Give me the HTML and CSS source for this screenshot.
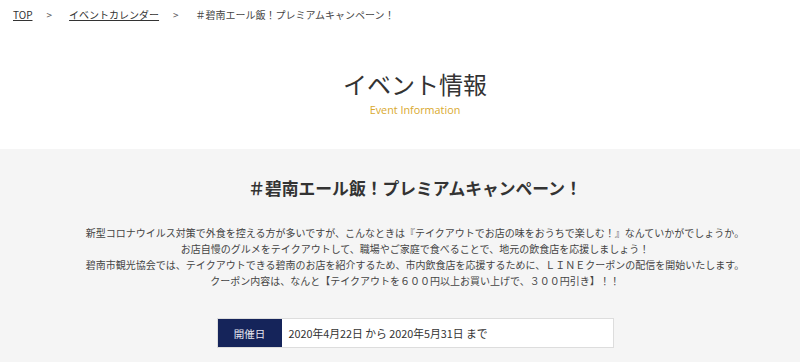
FILE: index.html
```html
<!DOCTYPE html>
<html lang="ja">
<head>
<meta charset="utf-8">
<link rel="stylesheet" href="styles.css">
</head>
<body>
<nav class="crumbs">
  <a class="crumb-link" href="#">TOP</a>
  <span class="sep">&gt;</span>
  <a class="crumb-link" href="#">イベントカレンダー</a>
  <span class="sep">&gt;</span>
  <span class="crumb-current">＃碧南エール飯！プレミアムキャンペーン！</span>
</nav>
<header class="page-head">
  <h1 class="page-title">イベント情報</h1>
  <p class="page-sub">Event Information</p>
</header>
<main class="main">
  <h2 class="event-title">＃碧南エール飯！プレミアムキャンペーン！</h2>
  <p class="event-desc">新型コロナウイルス対策で外食を控える方が多いですが、こんなときは『テイクアウトでお店の味をおうちで楽しむ！』なんていかがでしょうか。<br>お店自慢のグルメをテイクアウトして、職場やご家庭で食べることで、地元の飲食店を応援しましょう！<br>碧南市観光協会では、テイクアウトできる碧南のお店を紹介するため、市内飲食店を応援するために、ＬＩＮＥクーポンの配信を開始いたします。<br>クーポン内容は、なんと【テイクアウトを６００円以上お買い上げで、３００円引き】！！</p>
  <div class="info-table">
    <div class="info-row">
      <div class="info-label">開催日</div>
      <div class="info-value">2020年4月22日 から 2020年5月31日 まで</div>
    </div>
  </div>
</main>
</body>
</html>
```
FILE: styles.css
```css
html, body {
  margin: 0;
  padding: 0;
  background: #ffffff;
}
body {
  font-family: "Noto Sans CJK JP", "Noto Sans", sans-serif;
  color: #333333;
  width: 800px;
  height: 362px;
  overflow: hidden;
}
.crumbs {
  padding: 9px 13px 0;
  font-size: 10px;
  line-height: 12px;
  height: 12px;
  display: flex;
  align-items: center;
  color: #444;
}
.crumb-link {
  color: #333;
  text-decoration: underline;
}
.sep {
  margin: 0 17px 0 14px;
  color: #555;
}
.crumb-current {
  color: #444;
}
.page-head {
  padding: 48px 0 33px 30px;
  text-align: center;
}
.page-title {
  margin: 0;
  font-size: 24px;
  line-height: 30px;
  font-weight: 400;
  color: #333;
}
.page-sub {
  margin: 4px 0 0;
  font-size: 10.8px;
  line-height: 13px;
  color: #d9a92e;
  font-family: "Open Sans", "Noto Sans", sans-serif;
}
.main {
  background: #f5f5f5;
  padding: 27px 0 14px 30px;
  text-align: center;
}
.event-title {
  margin: 0;
  font-size: 16.8px;
  line-height: 24px;
  font-weight: 700;
  color: #333;
}
.event-desc {
  margin: 25px 0 0;
  font-size: 10px;
  line-height: 16px;
  color: #444;
}
.info-table {
  width: 397px;
  margin: 29px auto 0;
  border: 1px solid #dddddd;
  background: #ffffff;
  box-sizing: border-box;
}
.info-row {
  display: flex;
  height: 28px;
}
.info-label {
  width: 64px;
  background: #15245a;
  color: #e8e8f0;
  font-size: 10.5px;
  display: flex;
  align-items: center;
  justify-content: center;
}
.info-value {
  padding-left: 7px;
  font-size: 10.8px;
  display: flex;
  align-items: center;
  color: #333;
}
```
